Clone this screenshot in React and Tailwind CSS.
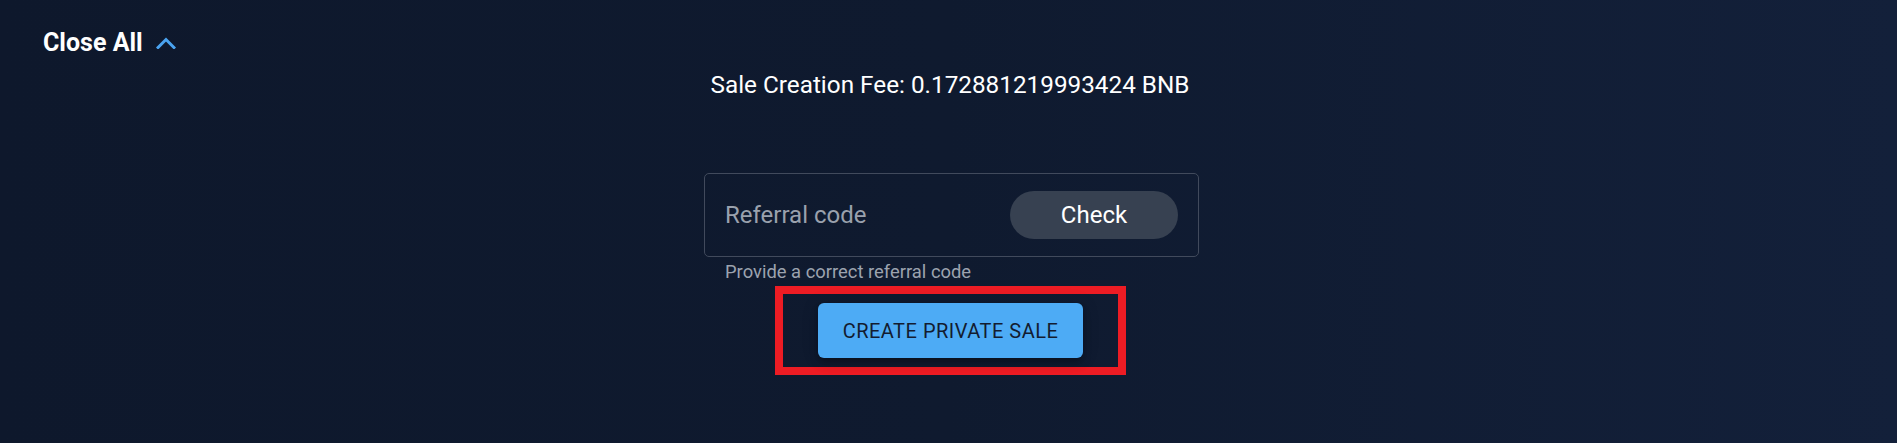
import React from "react";

function ChevronUp() {
    return (
        <svg width="20" height="12" viewBox="0 0 20 12" fill="none">
            <polyline
                points="2,10.5 10,2.5 18,10.5"
                stroke="#4aa3f0"
                strokeWidth="3"
                strokeLinecap="square"
                strokeLinejoin="miter"
            />
        </svg>
    );
}

export default function App() {
    return (
        <div className="w-full h-[443px] overflow-hidden bg-gradient-to-r from-[#0e182c] via-[#0f1a2f] to-[#13203a] font-['Roboto','Liberation_Sans',sans-serif] text-white">
            {/* cabecera */}
            <div className="flex items-center gap-[13px] pl-[43px] pt-[29px]">
                <span className="text-[25px] leading-[28px] font-bold">Close All</span>
                <ChevronUp />
            </div>

            <div className="flex flex-col items-center">
                <div className="mt-[10px] ml-[3px] text-[24.3px] leading-[36px]">
                    Sale Creation Fee: 0.172881219993424 BNB
                </div>

                {/* referral */}
                <div className="mt-[70px] ml-[6px] w-[495px]">
                    <div className="flex items-center justify-between h-[84px] pl-[20px] pr-[20px] border border-[#414a5c] rounded-[5px]">
                        <span className="text-[24px] leading-[28px] text-[#9aa1ad]">Referral code</span>
                        <button className="w-[168px] h-[48px] rounded-full bg-[#374151] text-[24px] leading-[28px] text-white">
                            Check
                        </button>
                    </div>
                    <div className="mt-[3px] pl-[21px] text-[18.4px] leading-[24px] text-[#9ca3af]">
                        Provide a correct referral code
                    </div>
                </div>

                {/* boton crear */}
                <div className="mt-[2px] ml-[4px] w-[351px] h-[89px] border-[8px] border-[#ed1c24] flex items-center justify-center">
                    <button className="w-[265px] h-[55px] rounded-[6px] bg-[#4dabf5] text-[20px] leading-[24px] tracking-[0.5px] text-[#131c30] shadow-[0_3px_5px_-1px_rgba(0,0,0,0.2),0_6px_10px_0_rgba(0,0,0,0.14),0_1px_18px_0_rgba(0,0,0,0.12)]">
                        CREATE PRIVATE SALE
                    </button>
                </div>
            </div>
        </div>
    );
}
